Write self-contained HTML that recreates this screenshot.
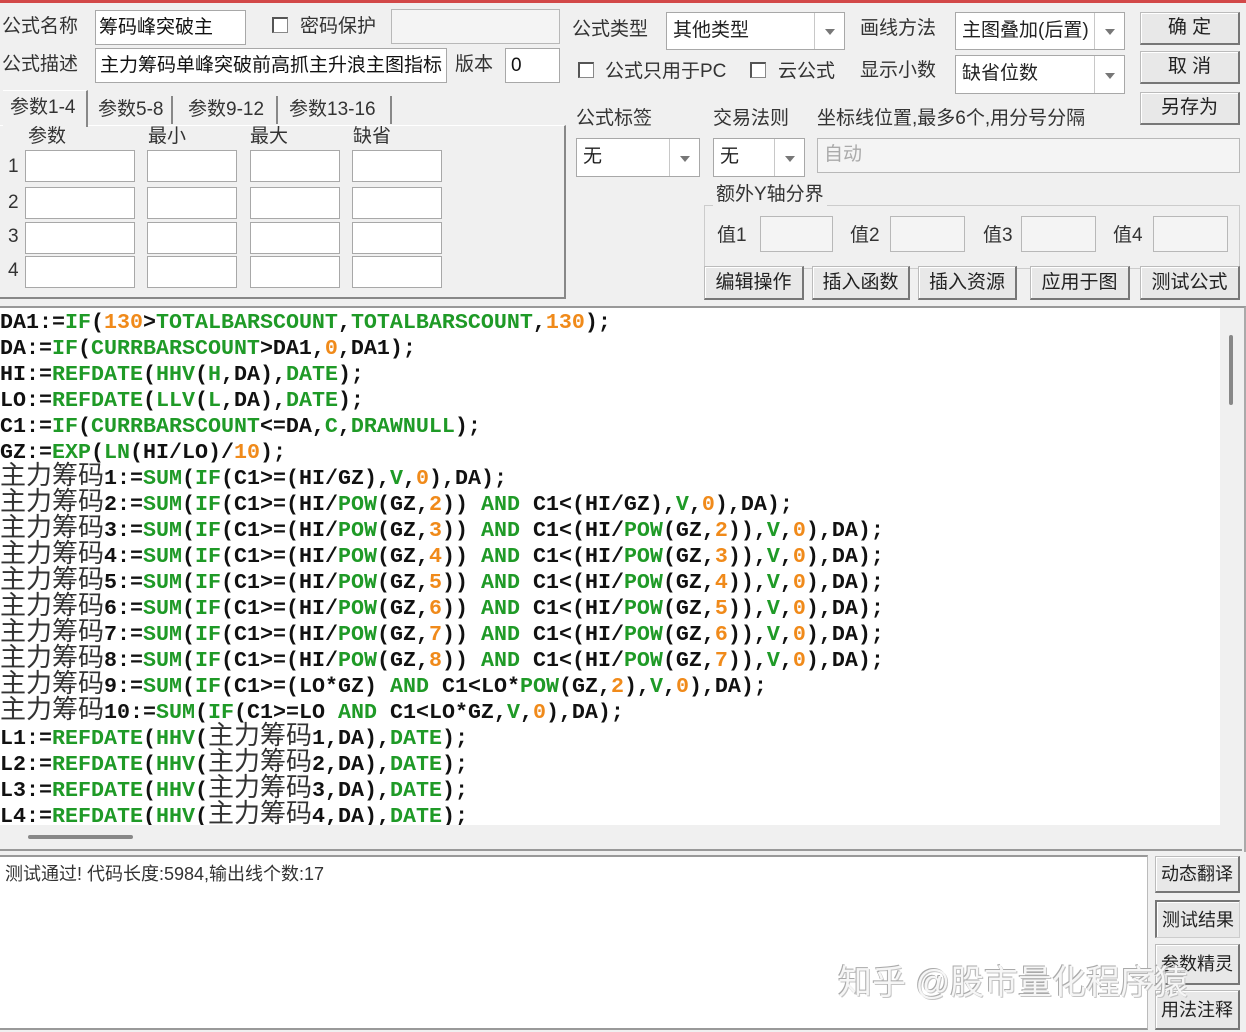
<!DOCTYPE html>
<html><head><meta charset="utf-8">
<style>
*{box-sizing:border-box;margin:0;padding:0}
body{width:1246px;height:1032px;background:#f0f0f0;position:relative;overflow:hidden;font-family:"Liberation Sans","Noto Sans CJK SC",sans-serif;color:#222}
.a{position:absolute}
.t{position:absolute;font-size:19px;line-height:24px;white-space:nowrap;color:#333}
.in{position:absolute;background:#fff;border:1px solid #a8a8a8}
.dis{position:absolute;background:#f4f4f4;border:1px solid #b8b8b8}
.sel{position:absolute;background:#fff;border:1px solid #a8a8a8;font-size:19px;line-height:36px;padding-left:6px;color:#222}
.sel .ar{position:absolute;right:0;top:0;bottom:0;width:30px;border-left:1px solid #c8c8c8}
.sel .ar:after{content:"";position:absolute;left:10px;top:50%;margin-top:-2px;border:5px solid transparent;border-top:6px solid #777;border-bottom:0}
.btn{position:absolute;background:#e8e8e8;border:1px solid #bbb;border-right:2px solid #777;border-bottom:2px solid #777;box-shadow:inset 1px 1px #fff;font-size:19px;text-align:center;color:#222}
.cb{position:absolute;width:16px;height:16px;background:#fff;border:1px solid #888;border-top:2px solid #555;border-left:2px solid #555}
#code{position:absolute;left:0;top:308px;width:1220px;height:517px;background:#fff;font-family:"Liberation Mono",monospace;font-weight:bold;font-size:21.67px;line-height:26px;white-space:pre;padding-top:2px;color:#111;overflow:hidden}
.g{color:#1f9a27}.o{color:#f08a1a}
.c{font-family:"Noto Sans CJK SC",sans-serif;font-weight:normal;font-size:26px;line-height:0;color:#333;letter-spacing:0}
</style></head><body>
<div class="a" style="left:0;top:0;width:1246px;height:3px;background:#d24848"></div>

<div class="t" style="left:2px;top:15px">公式名称</div>
<div class="in" style="left:95px;top:10px;width:151px;height:35px"></div>
<div class="t" style="left:99px;top:16px;color:#111">筹码峰突破主</div>
<div class="cb" style="left:272px;top:17px"></div>
<div class="t" style="left:300px;top:15px">密码保护</div>
<div class="dis" style="left:391px;top:9px;width:169px;height:35px"></div>

<div class="t" style="left:2px;top:53px">公式描述</div>
<div class="in" style="left:95px;top:48px;width:352px;height:35px;overflow:hidden"><div class="t" style="left:4px;top:5px;color:#111">主力筹码单峰突破前高抓主升浪主图指标</div></div>
<div class="t" style="left:455px;top:53px">版本</div>
<div class="in" style="left:505px;top:48px;width:55px;height:35px"><div class="t" style="left:5px;top:5px;color:#111">0</div></div>

<div class="a" style="left:0;top:125px;width:566px;height:174px;border-right:2px solid #888;border-bottom:2px solid #888;border-top:1px solid #fff"></div>
<div class="a" style="left:3px;top:90px;width:85px;height:37px;background:#f0f0f0;border-right:2px solid #888;border-top:1px solid #fff"></div>
<div class="t" style="left:10px;top:96px">参数1-4</div>
<div class="a" style="top:96px;width:2px;height:28px;background:#888;left:171px"></div>
<div class="t" style="left:98px;top:98px">参数5-8</div>
<div class="a" style="left:276px;top:96px;width:2px;height:28px;background:#888"></div>
<div class="t" style="left:188px;top:98px">参数9-12</div>
<div class="a" style="left:390px;top:96px;width:2px;height:28px;background:#888"></div>
<div class="t" style="left:289px;top:98px">参数13-16</div>

<div class="t" style="left:28px;top:125px">参数</div>
<div class="t" style="left:148px;top:125px">最小</div>
<div class="t" style="left:250px;top:125px">最大</div>
<div class="t" style="left:353px;top:125px">缺省</div>

<div class="t" style="left:8px;top:155px">1</div>
<div class="t" style="left:8px;top:191px">2</div>
<div class="t" style="left:8px;top:225px">3</div>
<div class="t" style="left:8px;top:259px">4</div>
<div class="in" style="left:25px;top:150px;width:110px;height:32px"></div><div class="in" style="left:147px;top:150px;width:90px;height:32px"></div><div class="in" style="left:250px;top:150px;width:90px;height:32px"></div><div class="in" style="left:352px;top:150px;width:90px;height:32px"></div>
<div class="in" style="left:25px;top:187px;width:110px;height:32px"></div><div class="in" style="left:147px;top:187px;width:90px;height:32px"></div><div class="in" style="left:250px;top:187px;width:90px;height:32px"></div><div class="in" style="left:352px;top:187px;width:90px;height:32px"></div>
<div class="in" style="left:25px;top:222px;width:110px;height:32px"></div><div class="in" style="left:147px;top:222px;width:90px;height:32px"></div><div class="in" style="left:250px;top:222px;width:90px;height:32px"></div><div class="in" style="left:352px;top:222px;width:90px;height:32px"></div>
<div class="in" style="left:25px;top:256px;width:110px;height:32px"></div><div class="in" style="left:147px;top:256px;width:90px;height:32px"></div><div class="in" style="left:250px;top:256px;width:90px;height:32px"></div><div class="in" style="left:352px;top:256px;width:90px;height:32px"></div>

<div class="t" style="left:572px;top:18px">公式类型</div>
<div class="sel" style="left:666px;top:12px;width:179px;height:38px">其他类型<div class="ar"></div></div>
<div class="t" style="left:860px;top:17px">画线方法</div>
<div class="sel" style="left:955px;top:12px;width:170px;height:38px">主图叠加(后置)<div class="ar"></div></div>
<div class="btn" style="left:1140px;top:12px;width:100px;height:33px;line-height:30px">确 定</div>

<div class="cb" style="left:578px;top:62px"></div>
<div class="t" style="left:605px;top:60px">公式只用于PC</div>
<div class="cb" style="left:750px;top:62px"></div>
<div class="t" style="left:778px;top:60px">云公式</div>
<div class="t" style="left:860px;top:59px">显示小数</div>
<div class="sel" style="left:955px;top:55px;width:170px;height:39px">缺省位数<div class="ar"></div></div>
<div class="btn" style="left:1140px;top:51px;width:100px;height:33px;line-height:30px">取 消</div>
<div class="btn" style="left:1140px;top:92px;width:100px;height:33px;line-height:30px">另存为</div>

<div class="t" style="left:576px;top:107px">公式标签</div>
<div class="t" style="left:713px;top:107px">交易法则</div>
<div class="t" style="left:817px;top:107px">坐标线位置,最多6个,用分号分隔</div>
<div class="sel" style="left:576px;top:138px;width:124px;height:39px">无<div class="ar"></div></div>
<div class="sel" style="left:713px;top:138px;width:92px;height:39px">无<div class="ar"></div></div>
<div class="dis" style="left:817px;top:138px;width:423px;height:35px"><div class="t" style="left:6px;top:4px;color:#aaa">自动</div></div>

<div class="a" style="left:704px;top:205px;width:536px;height:64px;border:1px solid #ccc"></div>
<div class="t" style="left:713px;top:183px;background:#f0f0f0;padding:0 3px">额外Y轴分界</div>
<div class="t" style="left:717px;top:224px">值1</div><div class="dis" style="left:760px;top:216px;width:73px;height:36px"></div>
<div class="t" style="left:850px;top:224px">值2</div><div class="dis" style="left:890px;top:216px;width:75px;height:36px"></div>
<div class="t" style="left:983px;top:224px">值3</div><div class="dis" style="left:1021px;top:216px;width:75px;height:36px"></div>
<div class="t" style="left:1113px;top:224px">值4</div><div class="dis" style="left:1153px;top:216px;width:75px;height:36px"></div>

<div class="btn" style="left:704px;top:266px;width:100px;height:34px;line-height:32px">编辑操作</div>
<div class="btn" style="left:812px;top:266px;width:98px;height:34px;line-height:32px">插入函数</div>
<div class="btn" style="left:918px;top:266px;width:99px;height:34px;line-height:32px">插入资源</div>
<div class="btn" style="left:1030px;top:266px;width:100px;height:34px;line-height:32px">应用于图</div>
<div class="btn" style="left:1140px;top:266px;width:100px;height:34px;line-height:32px">测试公式</div>

<div class="a" style="left:0;top:306px;width:1246px;height:546px;border-top:2px solid #999;border-right:2px solid #aaa"></div>
<div id="code">DA1:=<span class="g">IF</span>(<span class="o">130</span>&gt;<span class="g">TOTALBARSCOUNT</span>,<span class="g">TOTALBARSCOUNT</span>,<span class="o">130</span>);
DA:=<span class="g">IF</span>(<span class="g">CURRBARSCOUNT</span>&gt;DA1,<span class="o">0</span>,DA1);
HI:=<span class="g">REFDATE</span>(<span class="g">HHV</span>(<span class="g">H</span>,DA),<span class="g">DATE</span>);
LO:=<span class="g">REFDATE</span>(<span class="g">LLV</span>(<span class="g">L</span>,DA),<span class="g">DATE</span>);
C1:=<span class="g">IF</span>(<span class="g">CURRBARSCOUNT</span>&lt;=DA,<span class="g">C</span>,<span class="g">DRAWNULL</span>);
GZ:=<span class="g">EXP</span>(<span class="g">LN</span>(HI/LO)/<span class="o">10</span>);
<span class="c">主力筹码</span>1:=<span class="g">SUM</span>(<span class="g">IF</span>(C1&gt;=(HI/GZ),<span class="g">V</span>,<span class="o">0</span>),DA);
<span class="c">主力筹码</span>2:=<span class="g">SUM</span>(<span class="g">IF</span>(C1&gt;=(HI/<span class="g">POW</span>(GZ,<span class="o">2</span>)) <span class="g">AND</span> C1&lt;(HI/GZ),<span class="g">V</span>,<span class="o">0</span>),DA);
<span class="c">主力筹码</span>3:=<span class="g">SUM</span>(<span class="g">IF</span>(C1&gt;=(HI/<span class="g">POW</span>(GZ,<span class="o">3</span>)) <span class="g">AND</span> C1&lt;(HI/<span class="g">POW</span>(GZ,<span class="o">2</span>)),<span class="g">V</span>,<span class="o">0</span>),DA);
<span class="c">主力筹码</span>4:=<span class="g">SUM</span>(<span class="g">IF</span>(C1&gt;=(HI/<span class="g">POW</span>(GZ,<span class="o">4</span>)) <span class="g">AND</span> C1&lt;(HI/<span class="g">POW</span>(GZ,<span class="o">3</span>)),<span class="g">V</span>,<span class="o">0</span>),DA);
<span class="c">主力筹码</span>5:=<span class="g">SUM</span>(<span class="g">IF</span>(C1&gt;=(HI/<span class="g">POW</span>(GZ,<span class="o">5</span>)) <span class="g">AND</span> C1&lt;(HI/<span class="g">POW</span>(GZ,<span class="o">4</span>)),<span class="g">V</span>,<span class="o">0</span>),DA);
<span class="c">主力筹码</span>6:=<span class="g">SUM</span>(<span class="g">IF</span>(C1&gt;=(HI/<span class="g">POW</span>(GZ,<span class="o">6</span>)) <span class="g">AND</span> C1&lt;(HI/<span class="g">POW</span>(GZ,<span class="o">5</span>)),<span class="g">V</span>,<span class="o">0</span>),DA);
<span class="c">主力筹码</span>7:=<span class="g">SUM</span>(<span class="g">IF</span>(C1&gt;=(HI/<span class="g">POW</span>(GZ,<span class="o">7</span>)) <span class="g">AND</span> C1&lt;(HI/<span class="g">POW</span>(GZ,<span class="o">6</span>)),<span class="g">V</span>,<span class="o">0</span>),DA);
<span class="c">主力筹码</span>8:=<span class="g">SUM</span>(<span class="g">IF</span>(C1&gt;=(HI/<span class="g">POW</span>(GZ,<span class="o">8</span>)) <span class="g">AND</span> C1&lt;(HI/<span class="g">POW</span>(GZ,<span class="o">7</span>)),<span class="g">V</span>,<span class="o">0</span>),DA);
<span class="c">主力筹码</span>9:=<span class="g">SUM</span>(<span class="g">IF</span>(C1&gt;=(LO*GZ) <span class="g">AND</span> C1&lt;LO*<span class="g">POW</span>(GZ,<span class="o">2</span>),<span class="g">V</span>,<span class="o">0</span>),DA);
<span class="c">主力筹码</span>10:=<span class="g">SUM</span>(<span class="g">IF</span>(C1&gt;=LO <span class="g">AND</span> C1&lt;LO*GZ,<span class="g">V</span>,<span class="o">0</span>),DA);
L1:=<span class="g">REFDATE</span>(<span class="g">HHV</span>(<span class="c">主力筹码</span>1,DA),<span class="g">DATE</span>);
L2:=<span class="g">REFDATE</span>(<span class="g">HHV</span>(<span class="c">主力筹码</span>2,DA),<span class="g">DATE</span>);
L3:=<span class="g">REFDATE</span>(<span class="g">HHV</span>(<span class="c">主力筹码</span>3,DA),<span class="g">DATE</span>);
L4:=<span class="g">REFDATE</span>(<span class="g">HHV</span>(<span class="c">主力筹码</span>4,DA),<span class="g">DATE</span>);</div>
<div class="a" style="left:1220px;top:308px;width:22px;height:517px;background:#f0f0f0"></div>
<div class="a" style="left:1229px;top:335px;width:4px;height:70px;background:#888;border-radius:2px"></div>
<div class="a" style="left:0;top:825px;width:1242px;height:26px;background:#f0f0f0;border-bottom:2px solid #999"></div>
<div class="a" style="left:28px;top:835px;width:105px;height:4px;background:#888;border-radius:2px"></div>

<div class="a" style="left:0;top:855px;width:1148px;height:175px;background:#fff;border-top:2px solid #999;border-right:1px solid #bbb;border-bottom:2px solid #999"></div>
<div class="t" style="left:5px;top:862px;font-size:18px">测试通过! 代码长度:5984,输出线个数:17</div>
<div class="btn" style="left:1155px;top:856px;width:85px;height:37px;line-height:34px;font-size:18px">动态翻译</div>
<div class="btn" style="left:1155px;top:900px;width:85px;height:38px;line-height:36px;font-size:18px;border:1px solid #ccc;border-left:2px solid #777;border-top:2px solid #777">测试结果</div>
<div class="btn" style="left:1155px;top:944px;width:85px;height:41px;line-height:38px;font-size:18px">参数精灵</div>
<div class="btn" style="left:1155px;top:990px;width:85px;height:40px;line-height:38px;font-size:18px">用法注释</div>
<div class="t" style="left:838px;top:962px;font-size:34px;line-height:42px;color:#f6f6f6;text-shadow:-1px -1px 0 #aaa,1px 1px 0 #c4c4c4">知乎 @股市量化程序猿</div>
</body></html>
